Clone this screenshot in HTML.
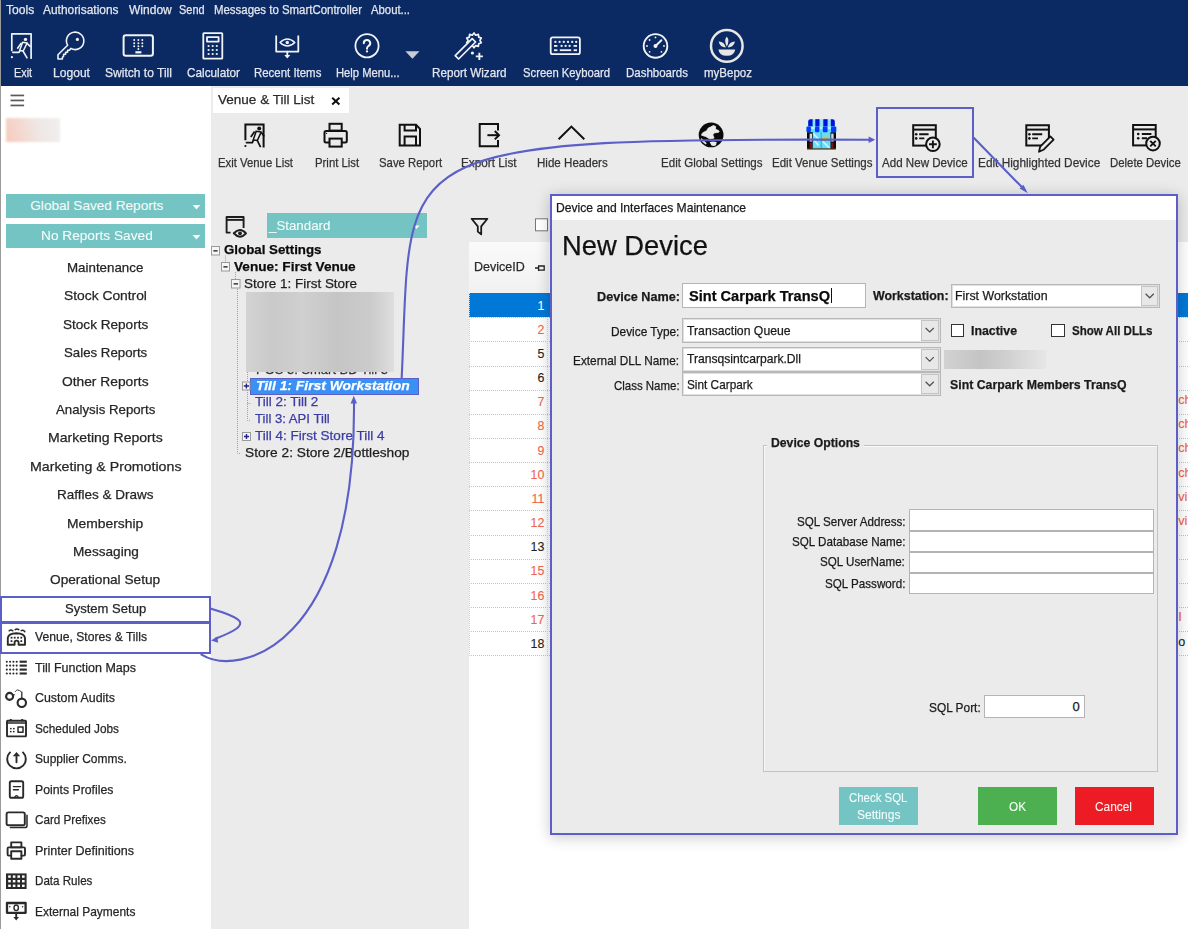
<!DOCTYPE html>
<html><head><meta charset="utf-8"><title>Venue &amp; Till List</title>
<style>
*{box-sizing:border-box;margin:0;padding:0}
html,body{width:1188px;height:929px;overflow:hidden;background:#fff;font-family:"Liberation Sans",sans-serif;color:#222}
body{position:relative}
.a{position:absolute}
.t{position:absolute;white-space:nowrap;line-height:1;transform-origin:0 0;-webkit-text-stroke:0.25px currentColor}
svg{position:absolute;overflow:visible}
</style></head><body>
<div class="a" style="left:0px;top:0px;width:1188px;height:86px;background:#0b2963"></div>
<div class="a" style="left:0px;top:86px;width:211px;height:843px;background:#fff"></div>
<div class="a" style="left:0px;top:0px;width:1px;height:929px;background:#9a9a9a"></div>
<div class="a" style="left:211px;top:86px;width:977px;height:843px;background:#ebebeb"></div>
<div class="a" style="left:469px;top:242px;width:719px;height:687px;background:#fff"></div>
<div class="t" style="left:6.2px;top:4.09px;font-size:12.3px;font-weight:normal;font-style:normal;color:#e4e7ee;transform:scaleX(0.9856);">Tools</div>
<div class="t" style="left:43.3px;top:4.09px;font-size:12.3px;font-weight:normal;font-style:normal;color:#e4e7ee;transform:scaleX(0.9686);">Authorisations</div>
<div class="t" style="left:128.7px;top:4.09px;font-size:12.3px;font-weight:normal;font-style:normal;color:#e4e7ee;transform:scaleX(0.9783);">Window</div>
<div class="t" style="left:179.4px;top:4.09px;font-size:12.3px;font-weight:normal;font-style:normal;color:#e4e7ee;transform:scaleX(0.8911);">Send</div>
<div class="t" style="left:213.9px;top:4.09px;font-size:12.3px;font-weight:normal;font-style:normal;color:#e4e7ee;transform:scaleX(0.9292);">Messages to SmartController</div>
<div class="t" style="left:371.3px;top:4.09px;font-size:12.3px;font-weight:normal;font-style:normal;color:#e4e7ee;transform:scaleX(0.9199);">About...</div>
<div class="t" style="left:13.9px;top:67.20px;font-size:12.4px;font-weight:normal;font-style:normal;color:#e4e7ee;transform:scaleX(0.8756);">Exit</div>
<div class="t" style="left:52.6px;top:67.20px;font-size:12.4px;font-weight:normal;font-style:normal;color:#e4e7ee;transform:scaleX(0.9755);">Logout</div>
<div class="t" style="left:104.8px;top:67.20px;font-size:12.4px;font-weight:normal;font-style:normal;color:#e4e7ee;transform:scaleX(0.9723);">Switch to Till</div>
<div class="t" style="left:186.9px;top:67.20px;font-size:12.4px;font-weight:normal;font-style:normal;color:#e4e7ee;transform:scaleX(0.9494);">Calculator</div>
<div class="t" style="left:253.9px;top:67.20px;font-size:12.4px;font-weight:normal;font-style:normal;color:#e4e7ee;transform:scaleX(0.9226);">Recent Items</div>
<div class="t" style="left:336.0px;top:67.20px;font-size:12.4px;font-weight:normal;font-style:normal;color:#e4e7ee;transform:scaleX(0.9047);">Help Menu...</div>
<div class="t" style="left:432.4px;top:67.20px;font-size:12.4px;font-weight:normal;font-style:normal;color:#e4e7ee;transform:scaleX(0.9414);">Report Wizard</div>
<div class="t" style="left:522.7px;top:67.20px;font-size:12.4px;font-weight:normal;font-style:normal;color:#e4e7ee;transform:scaleX(0.9080);">Screen Keyboard</div>
<div class="t" style="left:625.5px;top:67.20px;font-size:12.4px;font-weight:normal;font-style:normal;color:#e4e7ee;transform:scaleX(0.9273);">Dashboards</div>
<div class="t" style="left:704.0px;top:67.20px;font-size:12.4px;font-weight:normal;font-style:normal;color:#e4e7ee;transform:scaleX(0.9286);">myBepoz</div>

<svg style="left:0;top:0" width="800" height="86" viewBox="0 0 800 86">
<g fill="none" stroke="#f2f3f6" stroke-width="1.7" stroke-linecap="round" stroke-linejoin="round">
 <!-- exit -->
 <path d="M11.8,50.5 V33.8 H31.1 V58.2"/>
 <circle cx="25.5" cy="39.4" r="1.7" fill="#f2f3f6" stroke="none"/>
 <path d="M22.6,42.2 L27.2,43 L23.2,51 L19.6,50.6 Z" stroke-width="1.5"/>
 <path d="M21,43.4 L17.6,48.2 M27.4,43.6 L30.2,46.4 M19.8,51 L19,52.4 H12.8 M23,51 L27,57.8" stroke-width="1.6"/>
 <circle cx="11.9" cy="57.2" r="1.1" fill="#f2f3f6" stroke="none"/>
 <!-- key -->
 <path d="M67.6,45.2 A8.7,8.7 0 1 1 70.8,48.4 L69.4,50.2 L67.6,50.2 L67.6,52.2 L65.6,52.2 L65.6,54.2 L63.6,54.2 L63.6,56.2 L62.4,57.4 L62.4,59 L58,59 L58,54.8 Z" stroke-width="1.6"/>
 <circle cx="77.4" cy="39.4" r="1.6" fill="#f2f3f6" stroke="none"/>
 <!-- switch to till -->
 <rect x="123.6" y="35.3" width="29.3" height="20.5" rx="2.2" stroke-width="2"/>
</g>
<g fill="#f2f3f6">
 <circle cx="134.2" cy="40.1" r="1"/><circle cx="138.4" cy="40.1" r="1"/><circle cx="142.3" cy="40.1" r="1"/>
 <circle cx="134.2" cy="43.2" r="1"/><circle cx="138.4" cy="43.2" r="1"/><circle cx="142.3" cy="43.2" r="1"/>
 <circle cx="134.2" cy="46.2" r="1"/><circle cx="138.4" cy="46.2" r="1"/><circle cx="142.3" cy="46.2" r="1"/>
 <circle cx="138.4" cy="49" r="1"/><rect x="135.4" y="51.2" width="6" height="2.2"/>
 <!-- calculator dots -->
 <circle cx="208.6" cy="46" r="1.1"/><circle cx="212.7" cy="46" r="1.1"/><circle cx="216.8" cy="46" r="1.1"/>
 <circle cx="208.6" cy="50" r="1.1"/><circle cx="212.7" cy="50" r="1.1"/><circle cx="216.8" cy="50" r="1.1"/>
 <circle cx="208.6" cy="54" r="1.1"/><circle cx="212.7" cy="54" r="1.1"/><circle cx="216.8" cy="54" r="1.1"/>
</g>
<g fill="none" stroke="#f2f3f6" stroke-width="1.8" stroke-linecap="round" stroke-linejoin="round">
 <rect x="203.3" y="33.1" width="19" height="25.6" rx="0.6"/>
 <rect x="207" y="37.2" width="11.6" height="4.4"/>
 <!-- recent items -->
 <path d="M276.2,35.4 V51.6 H298.3 V35.4" stroke-linecap="butt"/>
 <path d="M287.3,51.6 V56"/>
 <path d="M280,42.5 Q287.3,35.5 294.8,42.5 Q287.3,49.5 280,42.5 Z" stroke-width="1.5"/>
</g>
<g fill="#f2f3f6">
 <circle cx="287.3" cy="42.5" r="1.7"/>
 <path d="M284.3,55 H290.3 L287.3,58.6 Z"/>
 <path d="M405.4,51.2 H419.5 L412.4,58.7 Z" fill="#c9ccd4"/>
</g>
<g fill="none" stroke="#f2f3f6" stroke-width="1.8" stroke-linecap="round">
 <circle cx="367" cy="45.8" r="11.6"/>
 <path d="M363.8,43.2 A3.2,3.2 0 1 1 368.4,46 Q367,46.8 367,48.8" stroke-width="2"/>
</g>
<circle cx="367" cy="51.4" r="1.15" fill="#f2f3f6"/>
<!-- wand -->
<g stroke="#f2f3f6" stroke-width="1.7" stroke-linejoin="round">
 <path fill="none" d="M474,33 L475.7,35.2 L478.4,34.4 L478.7,37.1 L481.3,38.1 L479.9,40.4 L481.3,42.7 L478.7,43.7 L478.4,46.4 L475.7,45.6 L474,47.8 L472.3,45.6 L469.6,46.4 L469.3,43.7 L466.7,42.7 L468.1,40.4 L466.7,38.1 L469.3,37.1 L469.6,34.4 L472.3,35.2 Z"/>
 <path fill="#0b2963" d="M455.2,55.6 L472.2,38.6 L475.6,42 L458.6,59 Z"/>
</g>
<g fill="#f2f3f6">
 <circle cx="472.4" cy="53" r="1.6"/>
 <path d="M478.4,52.8 h1.9 v2.6 h2.6 v1.9 h-2.6 v2.6 h-1.9 v-2.6 h-2.6 v-1.9 h2.6 Z"/>
</g>
<!-- keyboard -->
<rect x="550.7" y="37.4" width="29.2" height="16.8" rx="2" fill="none" stroke="#f2f3f6" stroke-width="1.8"/>
<g fill="#f2f3f6">
 <circle cx="555.4" cy="41.9" r="1.15"/><circle cx="559.6" cy="41.9" r="1.15"/><circle cx="563.8" cy="41.9" r="1.15"/><circle cx="568" cy="41.9" r="1.15"/><circle cx="572.2" cy="41.9" r="1.15"/><circle cx="576.2" cy="41.9" r="1.15"/>
 <rect x="554" y="45" width="3.4" height="1.8"/><circle cx="561.6" cy="45.9" r="1.15"/><circle cx="565.6" cy="45.9" r="1.15"/><circle cx="569.6" cy="45.9" r="1.15"/><rect x="573.6" y="45" width="3.4" height="1.8"/>
 <rect x="554" y="49.3" width="3.4" height="1.8"/><rect x="559.8" y="49.3" width="11.4" height="1.8"/><rect x="573.6" y="49.3" width="3.4" height="1.8"/>
</g>
<!-- dashboards -->
<circle cx="655.5" cy="45.9" r="11.8" fill="none" stroke="#f2f3f6" stroke-width="1.9"/>
<g fill="#f2f3f6">
 <circle cx="655.5" cy="37.4" r="0.9"/><circle cx="649.6" cy="40" r="0.9"/><circle cx="647" cy="46" r="0.9"/><circle cx="664" cy="46" r="0.9"/><circle cx="649.6" cy="51.8" r="0.9"/><circle cx="661.4" cy="51.8" r="0.9"/>
 <circle cx="655.5" cy="46" r="2"/>
</g>
<path d="M655.5,46 L661.4,40.2" stroke="#f2f3f6" stroke-width="1.9" stroke-linecap="round"/>
<!-- mybepoz -->
<circle cx="726.8" cy="45.9" r="15.8" fill="none" stroke="#e6e6e6" stroke-width="2.5"/>
<g fill="#e6e6e6">
 <path d="M726.8,36.6 Q730,40.6 726.8,46.4 Q723.6,40.6 726.8,36.6 Z"/>
 <path d="M718.6,41.6 Q724.4,41.8 725.8,47.6 Q720,47.4 718.6,41.6 Z"/>
 <path d="M735,41.6 Q729.2,41.8 727.8,47.6 Q733.6,47.4 735,41.6 Z"/>
 <path d="M718.4,49.4 H735.2 Q734.4,55.8 726.8,55.8 Q719.2,55.8 718.4,49.4 Z"/>
</g>
</svg>
<svg style="left:0;top:86px" width="211" height="70"><g fill="#5a5a5a"><rect x="10.5" y="8.6" width="13.6" height="1.7"/><rect x="10.5" y="13.6" width="13.6" height="1.7"/><rect x="10.5" y="18.6" width="13.6" height="1.7"/></g></svg>
<div class="a" style="left:6px;top:118px;width:54px;height:24px;background:linear-gradient(75deg,#f7cbbd 0%,#f3d9d1 30%,#efe7e4 60%,#f0f0f0 100%);filter:blur(1px)"></div>
<div class="a" style="left:6px;top:194px;width:199px;height:24px;background:#74c4c4"></div>
<div class="t" style="left:30.3px;top:199.49px;font-size:13.6px;font-weight:normal;font-style:normal;color:#f4fbfb;-webkit-text-stroke:0.1px currentColor;">Global Saved Reports</div>
<div class="a" style="left:6px;top:224px;width:199px;height:23.5px;background:#74c4c4"></div>
<div class="t" style="left:40.8px;top:229.49px;font-size:13.6px;font-weight:normal;font-style:normal;color:#f4fbfb;transform:scaleX(1.0061);-webkit-text-stroke:0.1px currentColor;">No Reports Saved</div>
<svg style="left:0;top:0" width="211" height="260"><path d="M192.6,205 H200.4 L196.5,209.6 Z M192.6,235 H200.4 L196.5,239.6 Z" fill="#f4fbfb"/></svg>
<div class="t" style="left:67.3px;top:260.96px;font-size:13.4px;font-weight:normal;font-style:normal;color:#262626;transform:scaleX(0.9957);">Maintenance</div>
<div class="t" style="left:64.0px;top:289.36px;font-size:13.4px;font-weight:normal;font-style:normal;color:#262626;transform:scaleX(1.0319);">Stock Control</div>
<div class="t" style="left:62.9px;top:317.76px;font-size:13.4px;font-weight:normal;font-style:normal;color:#262626;transform:scaleX(1.0136);">Stock Reports</div>
<div class="t" style="left:63.9px;top:346.16px;font-size:13.4px;font-weight:normal;font-style:normal;color:#262626;transform:scaleX(0.9897);">Sales Reports</div>
<div class="t" style="left:62.2px;top:374.56px;font-size:13.4px;font-weight:normal;font-style:normal;color:#262626;transform:scaleX(1.0290);">Other Reports</div>
<div class="t" style="left:55.8px;top:402.96px;font-size:13.4px;font-weight:normal;font-style:normal;color:#262626;transform:scaleX(0.9886);">Analysis Reports</div>
<div class="t" style="left:48.1px;top:431.36px;font-size:13.4px;font-weight:normal;font-style:normal;color:#262626;transform:scaleX(1.0486);">Marketing Reports</div>
<div class="t" style="left:29.7px;top:459.76px;font-size:13.4px;font-weight:normal;font-style:normal;color:#262626;transform:scaleX(1.0602);">Marketing &amp; Promotions</div>
<div class="t" style="left:57.2px;top:488.16px;font-size:13.4px;font-weight:normal;font-style:normal;color:#262626;transform:scaleX(1.0082);">Raffles &amp; Draws</div>
<div class="t" style="left:67.3px;top:516.56px;font-size:13.4px;font-weight:normal;font-style:normal;color:#262626;transform:scaleX(1.0349);">Membership</div>
<div class="t" style="left:72.5px;top:544.96px;font-size:13.4px;font-weight:normal;font-style:normal;color:#262626;transform:scaleX(1.0169);">Messaging</div>
<div class="t" style="left:50.4px;top:573.36px;font-size:13.4px;font-weight:normal;font-style:normal;color:#262626;transform:scaleX(1.0202);">Operational Setup</div>
<div class="t" style="left:64.9px;top:601.76px;font-size:13.4px;font-weight:normal;font-style:normal;color:#262626;transform:scaleX(0.9734);">System Setup</div>
<div class="a" style="left:0px;top:596px;width:211px;height:27px;border:2px solid #5b5fc7"></div>
<div class="a" style="left:0px;top:622px;width:211px;height:31.5px;border:2px solid #5b5fc7"></div>
<div class="t" style="left:35.4px;top:630.20px;font-size:13px;font-weight:normal;font-style:normal;color:#262626;transform:scaleX(0.9337);">Venue, Stores &amp; Tills</div>
<div class="t" style="left:35.4px;top:660.68px;font-size:13px;font-weight:normal;font-style:normal;color:#262626;transform:scaleX(0.9619);">Till Function Maps</div>
<div class="t" style="left:35.4px;top:691.16px;font-size:13px;font-weight:normal;font-style:normal;color:#262626;transform:scaleX(0.9545);">Custom Audits</div>
<div class="t" style="left:35.4px;top:721.64px;font-size:13px;font-weight:normal;font-style:normal;color:#262626;transform:scaleX(0.9080);">Scheduled Jobs</div>
<div class="t" style="left:35.4px;top:752.12px;font-size:13px;font-weight:normal;font-style:normal;color:#262626;transform:scaleX(0.9198);">Supplier Comms.</div>
<div class="t" style="left:35.4px;top:782.60px;font-size:13px;font-weight:normal;font-style:normal;color:#262626;transform:scaleX(0.9435);">Points Profiles</div>
<div class="t" style="left:35.4px;top:813.08px;font-size:13px;font-weight:normal;font-style:normal;color:#262626;transform:scaleX(0.8990);">Card Prefixes</div>
<div class="t" style="left:35.4px;top:843.56px;font-size:13px;font-weight:normal;font-style:normal;color:#262626;transform:scaleX(0.9649);">Printer Definitions</div>
<div class="t" style="left:35.4px;top:874.04px;font-size:13px;font-weight:normal;font-style:normal;color:#262626;transform:scaleX(0.8926);">Data Rules</div>
<div class="t" style="left:35.4px;top:904.52px;font-size:13px;font-weight:normal;font-style:normal;color:#262626;transform:scaleX(0.9202);">External Payments</div>
<svg style="left:0;top:0" width="40" height="929" viewBox="0 0 40 929">
<g fill="none" stroke="#2a2a2a" stroke-width="1.9" stroke-linejoin="round" stroke-linecap="round">
 <path d="M7.8,644.8 V637.8 Q8.4,633.4 16.4,633.2 Q24.4,633.4 25,637.8 V644.8 H18.6 V642.4 Q18.6,640.6 16.6,640.6 Q14.6,640.6 14.6,642.4 V644.8 Z"/>
 <path d="M9.2,630.8 Q11,629.4 12.8,630.8 M15.2,629.6 Q17,628.2 18.8,629.6 M21.2,630.6 Q23,629.8 24.8,631.6" stroke-width="1.5"/>
 <circle cx="9.6" cy="696.4" r="3.5" stroke-width="2.1"/>
 <circle cx="21.8" cy="702.8" r="4.2" stroke-width="2.1"/>
 <path d="M13.2,695.4 L14.2,694.8 M21.8,698.4 V692.2" stroke-width="1.3"/>
 <path d="M15.2,691.6 L17,689.8 L19,690.4 L21,691.4" stroke-width="1" stroke-dasharray="1 1"/>
 <rect x="7" y="720.8" width="19" height="15.6" rx="0.6"/>
 <path d="M7,723 H26" stroke-width="1.4"/>
 <rect x="18" y="727" width="5" height="5.2" stroke-width="1.5"/>
 <path d="M10,752.4 A9.3,9.3 0 1 0 23,752.4"/>
 <path d="M16.5,762.2 V755"/>
 <rect x="9.8" y="781.2" width="13.4" height="16.6" rx="1.6"/>
 <path d="M13.4,786.6 H20.6 M13.4,789.8 H18.4" stroke-width="1.4"/>
 <path d="M14.6,797.6 Q16.5,793.6 18.4,797.6" stroke-width="1.3"/>
 <path d="M10.4,827.6 H24.8 Q27,827.6 27,825.4 V815.2" stroke-width="1.5"/>
 <rect x="6.6" y="812.4" width="18.2" height="12.8" rx="1.8"/>
 <rect x="11.2" y="842.4" width="10.2" height="5"/>
 <path d="M11.2,855.6 H8.6 Q7.6,855.6 7.6,854.6 V848.4 Q7.6,847.4 8.6,847.4 H24 Q25,847.4 25,848.4 V854.6 Q25,855.6 24,855.6 H21.4"/>
 <rect x="11.2" y="851.2" width="10.2" height="7.6"/>
 <rect x="7" y="903" width="18.6" height="9.8" stroke-width="2.3"/>
 <ellipse cx="16.2" cy="907.8" rx="2.2" ry="2.8" stroke-width="1.4"/>
 <path d="M16.2,913 V918" />
</g>
<g fill="#2a2a2a">
 <rect x="10.6" y="636.8" width="1.8" height="1.8"/><rect x="13.8" y="636.8" width="1.8" height="1.8"/><rect x="17.1" y="636.8" width="1.8" height="1.8"/><rect x="20.4" y="636.8" width="1.8" height="1.8"/>
 <rect x="10.6" y="640.2" width="1.8" height="1.8"/><rect x="20.4" y="640.2" width="1.8" height="1.8"/>
 <path d="M20.2,756.2 L16.5,752 L12.8,756.2 Z" />
 <path d="M13.4,917 H19 L16.2,920.6 Z"/>
 <rect x="9.8" y="719" width="2" height="2.2"/><rect x="21.2" y="719" width="2" height="2.2"/>
 <circle cx="10.8" cy="728.6" r="0.9"/><circle cx="13.8" cy="728.6" r="0.9"/><circle cx="10.8" cy="731.6" r="0.9"/><circle cx="13.8" cy="731.6" r="0.9"/>
 <circle cx="9.8" cy="906.8" r="0.8"/><circle cx="22.6" cy="906.8" r="0.8"/>
 <rect x="6" y="873.4" width="20.6" height="15.6"/>
</g>
<g fill="#fff">
 <rect x="8.2" y="875.4" width="2.6" height="2.4"/><rect x="12.8" y="875.4" width="2.6" height="2.4"/><rect x="17.4" y="875.4" width="2.6" height="2.4"/><rect x="22" y="875.4" width="2.6" height="2.4"/>
 <rect x="8.2" y="880" width="2.6" height="2.4"/><rect x="12.8" y="880" width="2.6" height="2.4"/><rect x="17.4" y="880" width="2.6" height="2.4"/><rect x="22" y="880" width="2.6" height="2.4"/>
 <rect x="8.2" y="884.6" width="2.6" height="2.4"/><rect x="12.8" y="884.6" width="2.6" height="2.4"/><rect x="17.4" y="884.6" width="2.6" height="2.4"/><rect x="22" y="884.6" width="2.6" height="2.4"/>
</g>
<g fill="#2a2a2a">
<circle cx="6.8" cy="661.7" r="1.05"/><circle cx="6.8" cy="665.6" r="1.05"/><circle cx="6.8" cy="669.6" r="1.05"/><circle cx="6.8" cy="673.5" r="1.05"/><circle cx="10.1" cy="661.7" r="1.05"/><circle cx="10.1" cy="665.6" r="1.05"/><circle cx="10.1" cy="669.6" r="1.05"/><circle cx="10.1" cy="673.5" r="1.05"/><circle cx="13.4" cy="661.7" r="1.05"/><circle cx="13.4" cy="665.6" r="1.05"/><circle cx="13.4" cy="669.6" r="1.05"/><circle cx="13.4" cy="673.5" r="1.05"/><circle cx="16.7" cy="661.7" r="1.05"/><circle cx="16.7" cy="665.6" r="1.05"/><circle cx="16.7" cy="669.6" r="1.05"/><circle cx="16.7" cy="673.5" r="1.05"/><rect x="19.6" y="660.6500000000001" width="7.2" height="2.1"/><rect x="19.6" y="664.5500000000001" width="7.2" height="2.1"/><rect x="19.6" y="668.5500000000001" width="7.2" height="2.1"/><rect x="19.6" y="672.45" width="7.2" height="2.1"/>
</g>
</svg>
<div class="a" style="left:212.5px;top:88px;width:136.5px;height:25px;background:#fff"></div>
<div class="t" style="left:217.6px;top:93.16px;font-size:13.4px;font-weight:normal;font-style:normal;color:#2a2a2a;transform:scaleX(1.0110);">Venue &amp; Till List</div>
<svg style="left:0;top:0" width="400" height="120"><path d="M332.2,97.8 L339.4,104.6 M339.4,97.8 L332.2,104.6" stroke="#111" stroke-width="2"/></svg>
<div class="t" style="left:218.3px;top:156.83px;font-size:12.6px;font-weight:normal;font-style:normal;color:#333;transform:scaleX(0.8998);">Exit Venue List</div>
<div class="t" style="left:314.8px;top:156.83px;font-size:12.6px;font-weight:normal;font-style:normal;color:#333;transform:scaleX(0.9017);">Print List</div>
<div class="t" style="left:378.7px;top:156.83px;font-size:12.6px;font-weight:normal;font-style:normal;color:#333;transform:scaleX(0.9009);">Save Report</div>
<div class="t" style="left:461.4px;top:156.83px;font-size:12.6px;font-weight:normal;font-style:normal;color:#333;transform:scaleX(0.9341);">Export List</div>
<div class="t" style="left:537.0px;top:156.83px;font-size:12.6px;font-weight:normal;font-style:normal;color:#333;transform:scaleX(0.9190);">Hide Headers</div>
<div class="t" style="left:661.4px;top:156.83px;font-size:12.6px;font-weight:normal;font-style:normal;color:#333;transform:scaleX(0.9181);">Edit Global Settings</div>
<div class="t" style="left:771.7px;top:156.83px;font-size:12.6px;font-weight:normal;font-style:normal;color:#333;transform:scaleX(0.9138);">Edit Venue Settings</div>
<div class="t" style="left:882.0px;top:156.83px;font-size:12.6px;font-weight:normal;font-style:normal;color:#333;transform:scaleX(0.9201);">Add New Device</div>
<div class="t" style="left:977.9px;top:156.83px;font-size:12.6px;font-weight:normal;font-style:normal;color:#333;transform:scaleX(0.9388);">Edit Highlighted Device</div>
<div class="t" style="left:1109.6px;top:156.83px;font-size:12.6px;font-weight:normal;font-style:normal;color:#333;transform:scaleX(0.9039);">Delete Device</div>
<svg style="left:0;top:0" width="1188" height="180" viewBox="0 0 1188 180">
<g fill="none" stroke="#111" stroke-width="2" stroke-linejoin="miter" stroke-linecap="butt">
 <path d="M245.4,140.2 V124.4 H263.6 V147.4"/>
 <path d="M256.2,131.2 L261.2,132 L257.4,140.4 L253.2,140 Z" stroke-width="1.5"/>
 <path d="M254.6,131.6 L250.8,137 M261.4,132.6 L264.2,136.4 M253.4,140.2 L252.4,142.6 H245.8 M257.2,140.4 L260.6,147.2" stroke-width="1.7"/>
 <rect x="329.5" y="123.8" width="12.2" height="6.8"/>
 <path d="M329.5,142.6 H326 Q324.5,142.6 324.5,141.1 V132.4 Q324.5,130.9 326,130.9 H345.2 Q346.8,130.9 346.8,132.4 V141.1 Q346.8,142.6 345.2,142.6 H341.7"/>
 <rect x="329.5" y="138.6" width="12.2" height="8"/>
 <path d="M399.7,124.8 H416 L420,128.8 V145.6 H399.7 Z"/>
 <path d="M404.6,124.8 V130.6 H416 V124.8 M404.6,145.6 V136.6 H416 V145.6"/>
 <path d="M498,130.4 V124.1 H479.7 V146.3 H498 V140"/>
 <path d="M487.4,135.2 H499" />
 <path d="M494.8,131 L499,135.2 L494.8,139.4"/>
 <path d="M558.6,139.3 L571.4,126.6 L584.3,139.3"/>
 <rect x="913.2" y="125.2" width="22.6" height="20.4"/>
 <path d="M913.2,129.6 H935.8"/>
 <path d="M1044.6,145.6 H1026.3 V125.2 H1048.9 V138.4"/>
 <path d="M1026.3,129.6 H1048.9"/>
 <rect x="1133.1" y="125" width="22.6" height="20.4"/>
 <path d="M1133.1,129.4 H1155.7"/>
 <path d="M919.2,134.2 H928.6 M919.2,138.4 H924.4 M1032.2,134.2 H1042.2 M1032.2,138.4 H1038 M1141.8,134 H1151.4 M1141.8,138.3 H1147" stroke-width="1.9"/>
</g>
<g fill="#111">
 <circle cx="259.2" cy="128.4" r="2"/><circle cx="245.4" cy="146" r="1.1"/>
 <circle cx="326.6" cy="133.4" r="0.6"/>
 <circle cx="916.2" cy="134.2" r="1.3"/><circle cx="916.2" cy="138.4" r="1.3"/>
 <circle cx="1029.4" cy="134.2" r="1.3"/><circle cx="1029.4" cy="138.4" r="1.3"/>
 <circle cx="1138.2" cy="134" r="1.3"/><circle cx="1138.2" cy="138.3" r="1.3"/>
</g>
<g fill="#ebebeb" stroke="#111" stroke-width="2">
 <circle cx="932.9" cy="144.3" r="6.8"/>
 <circle cx="1153" cy="143.6" r="6.8"/>
 <path d="M1039,151.8 L1040.2,146.6 L1050.4,136.4 L1053.6,139.6 L1043.4,149.8 Z" stroke-linejoin="round" stroke-width="1.8"/>
</g>
<g stroke="#111" stroke-width="1.9">
 <path d="M932.9,140.4 V148.2 M929,144.3 H936.8"/>
 <path d="M1150.2,140.8 L1155.8,146.4 M1155.8,140.8 L1150.2,146.4"/>
</g>
<!-- globe -->
<circle cx="711.1" cy="134.9" r="12.4" fill="#0a0a0a"/>
<g fill="#ebebeb">
 <path d="M713.4,125.5 L715.7,126.5 L715.4,129 L719.2,131 L718.6,132.3 L714.1,132.9 L712.8,134.9 L714.1,138.1 L709.9,139 L705.7,136.5 L701.5,135.2 L702.5,132.9 L706.7,130.7 L708.3,128 L710.5,127.1 Z" stroke="#ebebeb" stroke-width="0.8" stroke-linejoin="round"/>
 <path d="M709.6,142 Q713,141 716.7,142 L716,145.2 Q713.6,146.4 711.5,145.5 Z"/>
 <path d="M701.2,138.1 L706.7,143.2 L705.7,144.5 Q702.4,142.4 700.8,140 Z"/>
</g>
<!-- store -->
<g>
 <rect x="807" y="131" width="29" height="18" rx="1" fill="#0a0a0a"/>
 <rect x="812.7" y="132" width="17.8" height="16.8" fill="#6adcfb"/>
 <path d="M813.4,133.6 L819.6,140.4 M813.4,139 L818.4,145.6 M822.6,141.4 L829.4,148" stroke="#c6f6ff" stroke-width="1.6"/>
 <rect x="820.6" y="132" width="1.2" height="16.8" fill="#28b8d8"/>
 <rect x="822.4" y="136.8" width="6.2" height="2.6" fill="#f2c200"/>
 <rect x="822.4" y="140.4" width="6.2" height="0.8" fill="#a8d000"/>
 <rect x="809.6" y="133.6" width="2.4" height="8" fill="#d4d4d4"/><rect x="831.2" y="133.6" width="2.4" height="8" fill="#d4d4d4"/>
 <rect x="809.6" y="142.6" width="2.4" height="5.6" fill="#8c0a0a"/><rect x="831.2" y="142.6" width="2.4" height="5.6" fill="#8c0a0a"/>
 <rect x="807" y="148.4" width="29" height="1.2" fill="#5a3a1a"/>
 <path d="M808.2,121.4 Q808.2,119.2 810.6,119.2 H832.4 Q834.8,119.2 834.8,121.4 V126.6 H808.2 Z" fill="#8fe2ff"/>
 <path d="M808.2,126.6 V121.4 Q808.2,119.2 810.6,119.2 H812.6 V126.6 Z" fill="#0010d8"/>
 <rect x="815.3" y="119.2" width="4.2" height="7.4" fill="#0010d8"/>
 <rect x="823.3" y="119.2" width="4.3" height="7.4" fill="#0010d8"/>
 <path d="M830.8,119.2 H832.4 Q834.8,119.2 834.8,121.4 V126.6 H830.8 Z" fill="#0010d8"/>
 <rect x="806.5" y="126.6" width="30" height="5.6" fill="#52dcff"/>
 <rect x="806.5" y="126.6" width="4.4" height="5.6" rx="1.2" fill="#0838ff"/>
 <rect x="815" y="126.6" width="4.4" height="5.6" rx="1.2" fill="#0838ff"/>
 <rect x="822.8" y="126.6" width="4.8" height="5.6" rx="1.2" fill="#0838ff"/>
 <rect x="831" y="126.6" width="5.2" height="5.6" rx="1.2" fill="#0838ff"/>
 <rect x="811.4" y="127" width="3.2" height="2.2" fill="#e8fbff" opacity=".7"/>
 <rect x="819.8" y="127" width="2.6" height="2.2" fill="#e8fbff" opacity=".7"/>
 <rect x="827.8" y="127" width="2.8" height="2.2" fill="#e8fbff" opacity=".7"/>
</g>
</svg>
<svg style="left:0;top:0" width="470" height="470" viewBox="0 0 470 470">
<g fill="none" stroke="#1e1e1e" stroke-width="1.9" stroke-linejoin="round">
 <path d="M230.6,232.6 H226.6 V217 H243.6 V228"/>
 <path d="M226.6,219.9 H243.6"/>
 <path d="M233.8,233.3 Q240,226.6 246,233.3 Q240,240 233.8,233.3 Z" stroke-width="2"/>
</g>
<circle cx="240" cy="233.3" r="1.9" fill="#1e1e1e"/>
</svg>
<div class="a" style="left:267.2px;top:213.3px;width:159.5px;height:24.8px;background:#74c4c4"></div>
<div class="t" style="left:269.4px;top:219.49px;font-size:13.6px;font-weight:normal;font-style:normal;color:#f4fbfb;transform:scaleX(0.9783);-webkit-text-stroke:0.1px currentColor;">_Standard</div>
<svg style="left:0;top:0" width="470" height="470"><path d="M413.6,225.6 H419.6 L416.6,229 Z" fill="#f4fbfb"/></svg>
<div class="t" style="left:223.9px;top:243.33px;font-size:13.2px;font-weight:bold;font-style:normal;color:#0c0c0c;transform:scaleX(1.0082);">Global Settings</div>
<div class="t" style="left:234.0px;top:259.73px;font-size:13.2px;font-weight:bold;font-style:normal;color:#0c0c0c;transform:scaleX(1.0313);">Venue: First Venue</div>
<div class="t" style="left:244.0px;top:277.03px;font-size:13.2px;font-weight:normal;font-style:normal;color:#1e1e1e;transform:scaleX(1.0219);">Store 1: First Store</div>
<div class="t" style="left:255.0px;top:395.23px;font-size:13.2px;font-weight:normal;font-style:normal;color:#3b3ba6;transform:scaleX(1.0249);">Till 2: Till 2</div>
<div class="t" style="left:255.0px;top:412.03px;font-size:13.2px;font-weight:normal;font-style:normal;color:#3b3ba6;transform:scaleX(0.9965);">Till 3: API Till</div>
<div class="t" style="left:255.0px;top:428.63px;font-size:13.2px;font-weight:normal;font-style:normal;color:#3b3ba6;transform:scaleX(1.0253);">Till 4: First Store Till 4</div>
<div class="t" style="left:244.6px;top:445.73px;font-size:13.2px;font-weight:normal;font-style:normal;color:#1e1e1e;transform:scaleX(1.0385);">Store 2: Store 2/Bottleshop</div>
<div class="t" style="left:256.0px;top:363.03px;font-size:13.2px;font-weight:normal;font-style:normal;color:#333;transform:scaleX(0.9833);">POS 3: Smart BD Till 3</div>
<div class="a" style="left:246.2px;top:292.4px;width:148.2px;height:79.8px;background:linear-gradient(90deg,#d3d3d3 0%,#c9c9c9 18%,#d0d0d0 38%,#c5c5c5 62%,#cbcbcb 84%,#dedede 100%)"></div>
<div class="a" style="left:250.2px;top:377.6px;width:168.7px;height:17.3px;background:#3990f5;border:1.6px solid #5b5fc7"></div>
<div class="t" style="left:255.8px;top:378.63px;font-size:13.2px;font-weight:bold;font-style:italic;color:#fff;transform:scaleX(1.0520);">Till 1: First Workstation</div>
<svg style="left:0;top:0" width="470" height="470" viewBox="0 0 470 470">
<g stroke="#a0a0a0" stroke-width="1" stroke-dasharray="1 1" fill="none">
 <path d="M225.5,255.5 V262.5"/>
 <path d="M235.5,272 V279"/>
 <path d="M237.5,289 V453.5 H241"/>
 <path d="M247.5,372 V420.5 H251 M247.5,403.5 H251"/>
</g>
<g fill="#f6f6f6" stroke="#9a9a9a" stroke-width="1">
 <rect x="211.5" y="246.5" width="8" height="8.5"/>
 <rect x="221.5" y="262.5" width="8" height="8.5"/>
 <rect x="231.5" y="279.5" width="8.5" height="8.5"/>
 <rect x="242.5" y="432.5" width="8" height="8"/>
 <rect x="242.5" y="382" width="7.5" height="8"/>
</g>
<g stroke="#111" stroke-width="1.3">
 <path d="M213.4,250.8 H217.6 M223.4,266.8 H227.6 M233.6,283.8 H238"/>
</g>
<g stroke="#22228a" stroke-width="1.4">
 <path d="M244,436.5 H249 M246.5,434 V439 M243.8,386 H249 M246.4,383.4 V388.6"/>
</g>
</svg>
<svg style="left:0;top:0" width="560" height="300" viewBox="0 0 560 300">
<path d="M471.6,218.8 H487.4 L481.2,226.4 V234.4 L477.8,231.6 V226.4 Z" fill="none" stroke="#1a1a1a" stroke-width="1.8" stroke-linejoin="round"/>
<rect x="535.5" y="218.8" width="12" height="12" fill="#fff" stroke="#777" stroke-width="1"/>
</svg>
<div class="a" style="left:469px;top:242px;width:80px;height:51px;background:linear-gradient(180deg,#fafafa,#f1f1f1)"></div>
<div class="t" style="left:473.8px;top:260.43px;font-size:13.2px;font-weight:normal;font-style:normal;color:#2a2a2a;transform:scaleX(0.9468);">DeviceID</div>
<svg style="left:0;top:0" width="560" height="300"><path d="M535,268 H538.6 M538.6,265.2 V271 M538.6,266 H544.2 V270.2 H538.6" fill="none" stroke="#222" stroke-width="1.3"/></svg>
<div class="a" style="left:469px;top:293.0px;width:719px;height:24px;background:#0078d7"></div>
<div class="a" style="left:469px;top:317.2px;width:719px;height:1px;background:repeating-linear-gradient(90deg,#c4c4c4 0 1px,transparent 1px 2px)"></div>
<div class="t" style="left:537.5px;top:299.70px;font-size:12.4px;font-weight:normal;font-style:normal;color:#fff;-webkit-text-stroke:0.1px currentColor;">1</div>
<div class="a" style="left:469px;top:341.3px;width:719px;height:1px;background:repeating-linear-gradient(90deg,#c4c4c4 0 1px,transparent 1px 2px)"></div>
<div class="t" style="left:537.5px;top:323.85px;font-size:12.4px;font-weight:normal;font-style:normal;color:#f3654c;-webkit-text-stroke:0.1px currentColor;">2</div>
<div class="a" style="left:469px;top:365.5px;width:719px;height:1px;background:repeating-linear-gradient(90deg,#c4c4c4 0 1px,transparent 1px 2px)"></div>
<div class="t" style="left:537.5px;top:348.00px;font-size:12.4px;font-weight:normal;font-style:normal;color:#222;-webkit-text-stroke:0.1px currentColor;">5</div>
<div class="a" style="left:469px;top:389.6px;width:719px;height:1px;background:repeating-linear-gradient(90deg,#c4c4c4 0 1px,transparent 1px 2px)"></div>
<div class="t" style="left:537.5px;top:372.15px;font-size:12.4px;font-weight:normal;font-style:normal;color:#222;-webkit-text-stroke:0.1px currentColor;">6</div>
<div class="a" style="left:469px;top:413.8px;width:719px;height:1px;background:repeating-linear-gradient(90deg,#c4c4c4 0 1px,transparent 1px 2px)"></div>
<div class="t" style="left:537.5px;top:396.30px;font-size:12.4px;font-weight:normal;font-style:normal;color:#f3654c;-webkit-text-stroke:0.1px currentColor;">7</div>
<div class="a" style="left:469px;top:437.9px;width:719px;height:1px;background:repeating-linear-gradient(90deg,#c4c4c4 0 1px,transparent 1px 2px)"></div>
<div class="t" style="left:537.5px;top:420.45px;font-size:12.4px;font-weight:normal;font-style:normal;color:#f3654c;-webkit-text-stroke:0.1px currentColor;">8</div>
<div class="a" style="left:469px;top:462.1px;width:719px;height:1px;background:repeating-linear-gradient(90deg,#c4c4c4 0 1px,transparent 1px 2px)"></div>
<div class="t" style="left:537.5px;top:444.60px;font-size:12.4px;font-weight:normal;font-style:normal;color:#f3654c;-webkit-text-stroke:0.1px currentColor;">9</div>
<div class="a" style="left:469px;top:486.2px;width:719px;height:1px;background:repeating-linear-gradient(90deg,#c4c4c4 0 1px,transparent 1px 2px)"></div>
<div class="t" style="left:530.6px;top:468.75px;font-size:12.4px;font-weight:normal;font-style:normal;color:#f3654c;-webkit-text-stroke:0.1px currentColor;">10</div>
<div class="a" style="left:469px;top:510.4px;width:719px;height:1px;background:repeating-linear-gradient(90deg,#c4c4c4 0 1px,transparent 1px 2px)"></div>
<div class="t" style="left:531.5px;top:492.90px;font-size:12.4px;font-weight:normal;font-style:normal;color:#f3654c;-webkit-text-stroke:0.1px currentColor;">11</div>
<div class="a" style="left:469px;top:534.6px;width:719px;height:1px;background:repeating-linear-gradient(90deg,#c4c4c4 0 1px,transparent 1px 2px)"></div>
<div class="t" style="left:530.6px;top:517.05px;font-size:12.4px;font-weight:normal;font-style:normal;color:#f3654c;-webkit-text-stroke:0.1px currentColor;">12</div>
<div class="a" style="left:469px;top:558.7px;width:719px;height:1px;background:repeating-linear-gradient(90deg,#c4c4c4 0 1px,transparent 1px 2px)"></div>
<div class="t" style="left:530.6px;top:541.20px;font-size:12.4px;font-weight:normal;font-style:normal;color:#222;-webkit-text-stroke:0.1px currentColor;">13</div>
<div class="a" style="left:469px;top:582.9px;width:719px;height:1px;background:repeating-linear-gradient(90deg,#c4c4c4 0 1px,transparent 1px 2px)"></div>
<div class="t" style="left:530.6px;top:565.35px;font-size:12.4px;font-weight:normal;font-style:normal;color:#f3654c;-webkit-text-stroke:0.1px currentColor;">15</div>
<div class="a" style="left:469px;top:607.0px;width:719px;height:1px;background:repeating-linear-gradient(90deg,#c4c4c4 0 1px,transparent 1px 2px)"></div>
<div class="t" style="left:530.6px;top:589.50px;font-size:12.4px;font-weight:normal;font-style:normal;color:#f3654c;-webkit-text-stroke:0.1px currentColor;">16</div>
<div class="a" style="left:469px;top:631.2px;width:719px;height:1px;background:repeating-linear-gradient(90deg,#c4c4c4 0 1px,transparent 1px 2px)"></div>
<div class="t" style="left:530.6px;top:613.65px;font-size:12.4px;font-weight:normal;font-style:normal;color:#f3654c;-webkit-text-stroke:0.1px currentColor;">17</div>
<div class="a" style="left:469px;top:655.3px;width:719px;height:1px;background:repeating-linear-gradient(90deg,#c4c4c4 0 1px,transparent 1px 2px)"></div>
<div class="t" style="left:530.6px;top:637.80px;font-size:12.4px;font-weight:normal;font-style:normal;color:#222;-webkit-text-stroke:0.1px currentColor;">18</div>
<div class="a" style="left:469px;top:293px;width:1px;height:362.75px;background:repeating-linear-gradient(180deg,#cfcfcf 0 1px,transparent 1px 2px)"></div>
<div class="a" style="left:547px;top:317px;width:1px;height:338.09999999999997px;background:repeating-linear-gradient(180deg,#d8d8d8 0 1px,transparent 1px 2px)"></div>
<div class="t" style="left:1178.2px;top:394.13px;font-size:12.6px;font-weight:normal;font-style:normal;color:#f2614a;-webkit-text-stroke:0.1px currentColor;">ch</div>
<div class="t" style="left:1178.2px;top:418.28px;font-size:12.6px;font-weight:normal;font-style:normal;color:#f2614a;-webkit-text-stroke:0.1px currentColor;">ch</div>
<div class="t" style="left:1178.2px;top:442.43px;font-size:12.6px;font-weight:normal;font-style:normal;color:#f2614a;-webkit-text-stroke:0.1px currentColor;">ch</div>
<div class="t" style="left:1178.2px;top:466.58px;font-size:12.6px;font-weight:normal;font-style:normal;color:#f2614a;-webkit-text-stroke:0.1px currentColor;">ch</div>
<div class="t" style="left:1178.2px;top:490.73px;font-size:12.6px;font-weight:normal;font-style:normal;color:#f2614a;-webkit-text-stroke:0.1px currentColor;">vi</div>
<div class="t" style="left:1178.2px;top:514.88px;font-size:12.6px;font-weight:normal;font-style:normal;color:#f2614a;-webkit-text-stroke:0.1px currentColor;">vi</div>
<div class="t" style="left:1178.2px;top:611.48px;font-size:12.6px;font-weight:normal;font-style:normal;color:#f2614a;-webkit-text-stroke:0.1px currentColor;">I</div>
<div class="t" style="left:1178.2px;top:635.63px;font-size:12.6px;font-weight:normal;font-style:normal;color:#222;-webkit-text-stroke:0.1px currentColor;">o</div>
<div class="a" style="left:550px;top:193.5px;width:628px;height:641.5px;background:#ebebeb;border:2px solid #5b5fc7;box-shadow:0 2px 14px rgba(0,0,0,.22)"></div>
<div class="a" style="left:552px;top:195.5px;width:624px;height:24.5px;background:#fff"></div>
<div class="t" style="left:556.3px;top:201.30px;font-size:13px;font-weight:normal;font-style:normal;color:#1a1a1a;transform:scaleX(0.9323);">Device and Interfaces Maintenance</div>
<div class="t" style="left:561.5px;top:232.44px;font-size:27.6px;font-weight:normal;font-style:normal;color:#111;transform:scaleX(0.9915);">New Device</div>
<div class="t" style="left:597.2px;top:290.43px;font-size:13.2px;font-weight:bold;font-style:normal;color:#1a1a1a;transform:scaleX(0.9586);">Device Name:</div>
<div class="t" style="left:611.0px;top:325.00px;font-size:13px;font-weight:normal;font-style:normal;color:#1a1a1a;transform:scaleX(0.9131);">Device Type:</div>
<div class="t" style="left:573.4px;top:353.60px;font-size:13px;font-weight:normal;font-style:normal;color:#1a1a1a;transform:scaleX(0.9093);">External DLL Name:</div>
<div class="t" style="left:613.8px;top:378.50px;font-size:13px;font-weight:normal;font-style:normal;color:#1a1a1a;transform:scaleX(0.8816);">Class Name:</div>
<div class="t" style="left:873.3px;top:289.23px;font-size:13.2px;font-weight:bold;font-style:normal;color:#1a1a1a;transform:scaleX(0.9400);">Workstation:</div>
<div class="a" style="left:682.2px;top:283px;width:183.5px;height:25px;background:#fff;border:1px solid #b4b4b4"></div>
<div class="t" style="left:688.8px;top:287.50px;font-size:15px;font-weight:bold;font-style:normal;color:#0a0a0a;transform:scaleX(0.9721);">Sint Carpark TransQ</div>
<div class="a" style="left:830.6px;top:287.6px;width:1.2px;height:15px;background:#111"></div>
<div class="a" style="left:682.2px;top:318.1px;width:258.5px;height:24.9px;background:#fff;border:1px solid #b8b8b8;box-shadow:inset 0 0 0 1px #e0e0e0"></div>
<div class="a" style="left:921.3000000000001px;top:320.1px;width:17.4px;height:20.9px;background:#e8e8e8;border:1px solid #c4c4c4"></div>
<svg style="left:921.3000000000001px;top:320.1px" width="18" height="24.9"><path d="M4.6,8.0 L8.7,12.0 L12.8,8.0" fill="none" stroke="#505050" stroke-width="1.2"/></svg>
<div class="a" style="left:682.2px;top:346.5px;width:258.5px;height:25px;background:#fff;border:1px solid #b8b8b8;box-shadow:inset 0 0 0 1px #e0e0e0"></div>
<div class="a" style="left:921.3000000000001px;top:348.5px;width:17.4px;height:21px;background:#e8e8e8;border:1px solid #c4c4c4"></div>
<svg style="left:921.3000000000001px;top:348.5px" width="18" height="25"><path d="M4.6,8.1 L8.7,12.1 L12.8,8.1" fill="none" stroke="#505050" stroke-width="1.2"/></svg>
<div class="a" style="left:682.2px;top:372px;width:258.5px;height:24.3px;background:#fff;border:1px solid #b8b8b8;box-shadow:inset 0 0 0 1px #e0e0e0"></div>
<div class="a" style="left:921.3000000000001px;top:374px;width:17.4px;height:20.3px;background:#e8e8e8;border:1px solid #c4c4c4"></div>
<svg style="left:921.3000000000001px;top:374px" width="18" height="24.3"><path d="M4.6,7.8 L8.7,11.8 L12.8,7.8" fill="none" stroke="#505050" stroke-width="1.2"/></svg>
<div class="a" style="left:950.8px;top:283.9px;width:209.6px;height:24.4px;background:#fff;border:1px solid #b8b8b8;box-shadow:inset 0 0 0 1px #e0e0e0"></div>
<div class="a" style="left:1140.9999999999998px;top:285.9px;width:17.4px;height:20.4px;background:#e8e8e8;border:1px solid #c4c4c4"></div>
<svg style="left:1140.9999999999998px;top:285.9px" width="18" height="24.4"><path d="M4.6,7.8 L8.7,11.8 L12.8,7.8" fill="none" stroke="#505050" stroke-width="1.2"/></svg>
<div class="t" style="left:686.8px;top:323.50px;font-size:13px;font-weight:normal;font-style:normal;color:#1a1a1a;transform:scaleX(0.9411);">Transaction Queue</div>
<div class="t" style="left:686.8px;top:352.20px;font-size:13px;font-weight:normal;font-style:normal;color:#1a1a1a;transform:scaleX(0.9319);">Transqsintcarpark.Dll</div>
<div class="t" style="left:686.8px;top:377.60px;font-size:13px;font-weight:normal;font-style:normal;color:#1a1a1a;transform:scaleX(0.9079);">Sint Carpark</div>
<div class="t" style="left:955.2px;top:288.90px;font-size:13px;font-weight:normal;font-style:normal;color:#1a1a1a;transform:scaleX(0.9509);">First Workstation</div>
<div class="a" style="left:951.1px;top:323.9px;width:13.3px;height:13px;background:#fff;border:1.3px solid #333"></div>
<div class="t" style="left:971.3px;top:323.83px;font-size:13.2px;font-weight:bold;font-style:normal;color:#1a1a1a;transform:scaleX(0.9378);">Inactive</div>
<div class="a" style="left:1051.3px;top:323.9px;width:13.6px;height:13px;background:#fff;border:1.3px solid #333"></div>
<div class="t" style="left:1072.0px;top:323.83px;font-size:13.2px;font-weight:bold;font-style:normal;color:#1a1a1a;transform:scaleX(0.8769);">Show All DLLs</div>
<div class="a" style="left:944.2px;top:350.1px;width:102.2px;height:19.4px;background:linear-gradient(90deg,#d2d2d2 0%,#c4c4c4 35%,#cfcfcf 60%,#e6e6e6 100%)"></div>
<div class="t" style="left:949.7px;top:378.13px;font-size:13.2px;font-weight:bold;font-style:normal;color:#1a1a1a;transform:scaleX(0.9336);">Sint Carpark Members TransQ</div>
<div class="a" style="left:763.4px;top:444.9px;width:394.4px;height:327.1px;border:1px solid #c2c2c2;box-shadow:inset 1px 1px 0 #fafafa"></div>
<div class="a" style="left:767px;top:436px;width:97px;height:16px;background:#ebebeb"></div>
<div class="t" style="left:770.9px;top:436.13px;font-size:13.2px;font-weight:bold;font-style:normal;color:#1a1a1a;transform:scaleX(0.9262);">Device Options</div>
<div class="t" style="left:796.6px;top:515.63px;font-size:12.6px;font-weight:normal;font-style:normal;color:#1a1a1a;transform:scaleX(0.9212);">SQL Server Address:</div>
<div class="a" style="left:908.9px;top:509.4px;width:245.1px;height:21.399999999999977px;background:#fff;border:1px solid #b4b4b4"></div>
<div class="t" style="left:791.7px;top:535.63px;font-size:12.6px;font-weight:normal;font-style:normal;color:#1a1a1a;transform:scaleX(0.9243);">SQL Database Name:</div>
<div class="a" style="left:908.9px;top:530.5px;width:245.1px;height:21.299999999999955px;background:#fff;border:1px solid #b4b4b4"></div>
<div class="t" style="left:820.3px;top:556.33px;font-size:12.6px;font-weight:normal;font-style:normal;color:#1a1a1a;transform:scaleX(0.9232);">SQL UserName:</div>
<div class="a" style="left:908.9px;top:551.5px;width:245.1px;height:21.299999999999955px;background:#fff;border:1px solid #b4b4b4"></div>
<div class="t" style="left:824.8px;top:577.83px;font-size:12.6px;font-weight:normal;font-style:normal;color:#1a1a1a;transform:scaleX(0.9234);">SQL Password:</div>
<div class="a" style="left:908.9px;top:572.5px;width:245.1px;height:21.5px;background:#fff;border:1px solid #b4b4b4"></div>
<div class="t" style="left:928.5px;top:701.73px;font-size:12.6px;font-weight:normal;font-style:normal;color:#1a1a1a;transform:scaleX(0.9425);">SQL Port:</div>
<div class="a" style="left:984.3px;top:695.4px;width:100.7px;height:22.6px;background:#fff;border:1px solid #b4b4b4"></div>
<div class="t" style="left:1072.4px;top:700.00px;font-size:13px;font-weight:normal;font-style:normal;color:#1a1a1a;">0</div>
<div class="a" style="left:839.2px;top:787px;width:79.2px;height:37.8px;background:#74c4c4"></div>
<div class="t" style="left:849.4px;top:791.20px;font-size:13px;font-weight:normal;font-style:normal;color:#f4fbfb;transform:scaleX(0.8785);-webkit-text-stroke:0.1px currentColor;">Check SQL</div>
<div class="t" style="left:856.9px;top:808.20px;font-size:13px;font-weight:normal;font-style:normal;color:#f4fbfb;transform:scaleX(0.9239);-webkit-text-stroke:0.1px currentColor;">Settings</div>
<div class="a" style="left:977.6px;top:787px;width:79.1px;height:37.8px;background:#4caf50"></div>
<div class="t" style="left:1008.5px;top:799.60px;font-size:13px;font-weight:normal;font-style:normal;color:#f6fff6;transform:scaleX(0.9051);-webkit-text-stroke:0.1px currentColor;">OK</div>
<div class="a" style="left:1074.5px;top:787px;width:79.1px;height:37.8px;background:#ed1b24"></div>
<div class="t" style="left:1095.2px;top:799.60px;font-size:13px;font-weight:normal;font-style:normal;color:#fff4f4;transform:scaleX(0.9143);-webkit-text-stroke:0.1px currentColor;">Cancel</div>
<div class="a" style="left:875.9px;top:106.7px;width:98.5px;height:70.9px;border:2px solid #5b5fc7"></div>
<svg style="left:0;top:0" width="1188" height="929" viewBox="0 0 1188 929">
<g fill="none" stroke="#5b5fc7" stroke-width="2.1" stroke-linecap="round">
 <path d="M401.7,377.6 C412.6,149.7 377.8,137.7 870,139.7"/>
 <path d="M974,138 L1024.5,189.8"/>
 <path d="M201.5,654.6 C239.1,677.6 355.9,647.7 354,402"/>
 <path d="M210.3,608.6 C243.2,618.6 254.5,623.8 216,638.4"/>
</g>
<g fill="#5b5fc7">
 <path d="M875.2,139.7 L868.6,136.4 L868.6,143 Z"/>
 <path d="M1027.8,193.2 L1019.6,188.4 L1023.4,184.8 Z"/>
 <path d="M353.8,395.8 L350.6,403.4 L357,403.4 Z"/>
 <path d="M211,640.4 L217.2,636.4 L218.2,642.8 Z"/>
</g>
</svg>
</body></html>
